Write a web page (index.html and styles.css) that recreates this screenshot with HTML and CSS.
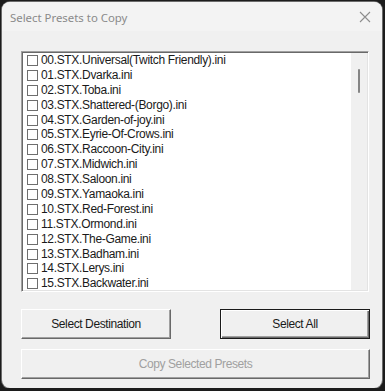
FILE: index.html
```html
<!DOCTYPE html>
<html lang="en">
<head>
    <meta charset="UTF-8">
    <meta name="viewport" content="width=device-width, initial-scale=1.0">
    <title>Select Presets to Copy</title>
    <link rel="stylesheet" href="styles.css">
</head>
<body>
    <div class="window">
        <div class="titlebar">
            <span class="title">Select Presets to Copy</span>
            <svg class="close" width="12" height="12" viewBox="0 0 12 12">
                <path d="M1 1 L11 11 M11 1 L1 11" stroke="#8d8d8d" stroke-width="1.1" fill="none"/>
            </svg>
        </div>
        <div class="client">
            <div class="listbox">
                <ul class="items">
                    <li><span class="check"></span>00.STX.Universal(Twitch Friendly).ini</li>
                    <li><span class="check"></span>01.STX.Dvarka.ini</li>
                    <li><span class="check"></span>02.STX.Toba.ini</li>
                    <li><span class="check"></span>03.STX.Shattered-(Borgo).ini</li>
                    <li><span class="check"></span>04.STX.Garden-of-joy.ini</li>
                    <li><span class="check"></span>05.STX.Eyrie-Of-Crows.ini</li>
                    <li><span class="check"></span>06.STX.Raccoon-City.ini</li>
                    <li><span class="check"></span>07.STX.Midwich.ini</li>
                    <li><span class="check"></span>08.STX.Saloon.ini</li>
                    <li><span class="check"></span>09.STX.Yamaoka.ini</li>
                    <li><span class="check"></span>10.STX.Red-Forest.ini</li>
                    <li><span class="check"></span>11.STX.Ormond.ini</li>
                    <li><span class="check"></span>12.STX.The-Game.ini</li>
                    <li><span class="check"></span>13.STX.Badham.ini</li>
                    <li><span class="check"></span>14.STX.Lerys.ini</li>
                    <li><span class="check"></span>15.STX.Backwater.ini</li>
                </ul>
                <div class="scrollbar"><div class="thumb"></div></div>
            </div>
            <div class="row">
                <button class="btn">Select Destination</button>
                <button class="btn default">Select All</button>
            </div>
            <button class="btn wide" disabled>Copy Selected Presets</button>
        </div>
    </div>
</body>
</html>
```

FILE: styles.css
```css
body {
    margin: 0;
    background-color: #1c1c1c;
    font-family: "Liberation Sans", Arial, sans-serif;
    font-size: 12px;
    color: #1a1a1a;
}
.window {
    margin: 2px 0 0 2px;
    width: 380px;
    height: 386px;
    background-color: #f0f0f0;
    border-radius: 8px;
    box-shadow: 0 0 0 1px #6b6b6b;
    overflow: hidden;
    display: flex;
    flex-direction: column;
}
.titlebar {
    height: 29px;
    background-color: #f3f3f3;
    display: flex;
    align-items: center;
    justify-content: space-between;
    padding: 0 8px 0 8px;
}
.title {
    font-family: "Noto Sans", sans-serif;
    font-size: 11.4px;
    color: #8a8a8a;
    padding-top: 1px;
}
.close {
    margin-right: 3px;
}
.client {
    flex: 1;
    padding: 20px 12px 0 19px;
    display: flex;
    flex-direction: column;
}
.listbox {
    width: 348px;
    height: 241px;
    box-sizing: border-box;
    background-color: #fff;
    border-top: 1px solid #a0a0a0;
    border-left: 1px solid #a0a0a0;
    border-right: 1px solid #fff;
    border-bottom: 1px solid #fff;
    box-shadow: inset 1px 1px 0 #696969, inset -1px -1px 0 #e3e3e3;
    display: flex;
    overflow: hidden;
}
.items {
    list-style: none;
    margin: 0;
    padding: 1px 0 0 2px;
    flex: 1;
    letter-spacing: -0.33px;
}
.items li {
    height: 14.9px;
    line-height: 14.9px;
    display: flex;
    align-items: center;
    white-space: nowrap;
}
.check {
    width: 9px;
    height: 9px;
    border: 1px solid #6e6e6e;
    background-color: #fff;
    margin: 0 3px 0 3px;
    flex-shrink: 0;
}
.scrollbar {
    width: 16px;
    margin: 1px 1px 1px 0;
    background-color: #f0f0f0;
    position: relative;
}
.thumb {
    position: absolute;
    left: 7px;
    top: 16px;
    width: 2px;
    height: 24px;
    border-radius: 1px;
    background-color: #858585;
}
.row {
    display: flex;
    justify-content: space-between;
    width: 349px;
    margin-top: 17px;
}
.btn {
    width: 150px;
    height: 30px;
    font-family: "Liberation Sans", Arial, sans-serif;
    font-size: 12px;
    letter-spacing: -0.4px;
    color: #1a1a1a;
    background-color: #f0f0f0;
    border-top: 1px solid #fff;
    border-left: 1px solid #fff;
    border-right: 1px solid #696969;
    border-bottom: 1px solid #696969;
    box-shadow: inset -1px -1px 0 #a0a0a0;
    padding: 0;
}
.btn.default {
    border: 1px solid #1a1a1a;
    box-shadow: inset 1px 1px 0 #fff, inset -1px -1px 0 #696969, inset -2px -2px 0 #a0a0a0;
}
.btn.wide {
    width: 349px;
    margin-top: 10px;
    color: #a0a0a0;
}
```
